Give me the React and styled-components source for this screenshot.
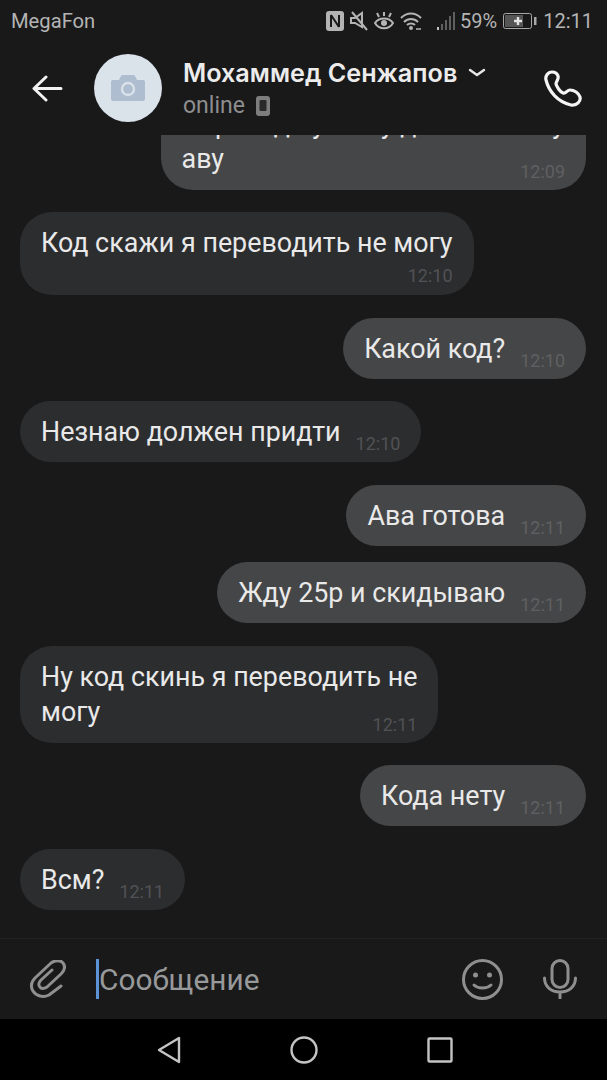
import React from "react";
import styled, { createGlobalStyle } from "styled-components";

const messages = [
  { id: 1, out: true, lines: ["Переведи у кому делаю ей эту", "аву"], time: "12:09", layout: "overlap" },
  { id: 2, lines: ["Код скажи я переводить не могу"], time: "12:10", layout: "below", gap: 22 },
  { id: 3, out: true, lines: ["Какой код?"], time: "12:10" },
  { id: 4, lines: ["Незнаю должен придти"], time: "12:10" },
  { id: 5, out: true, lines: ["Ава готова"], time: "12:11" },
  { id: 6, out: true, lines: ["Жду 25р и скидываю"], time: "12:11", gap: 16 },
  { id: 7, lines: ["Ну код скинь я переводить не", "могу"], time: "12:11", layout: "overlap" },
  { id: 8, out: true, lines: ["Кода нету"], time: "12:11" },
  { id: 9, lines: ["Всм?"], time: "12:11" },
];

function StatusIcons() {
  return (
    <>
      <svg width="18" height="20" viewBox="0 0 18 20">
        <rect width="18" height="20" y="0" rx="3" fill="#b4b4b4" />
        <path d="M5 4v12M13 4v12M5 4l8 12" stroke="#19191a" strokeWidth="2" fill="none" />
      </svg>
      <svg width="18" height="20" viewBox="0 0 18 20" fill="none" stroke="#b4b4b4" strokeWidth="2">
        <path d="M1 7h4l7-5v14l-7-4H1z" />
        <path d="M2 1l15 18" />
      </svg>
      <svg width="20" height="20" viewBox="0 0 20 20" fill="none" stroke="#b4b4b4" strokeWidth="2">
        <path d="M1 12c4-6 14-6 18 0-4 7-14 7-18 0z" />
        <circle cx="10" cy="12" r="3" fill="#b4b4b4" stroke="none" />
        <path d="M3 2l2 4M10 1v4M17 2l-2 4" />
      </svg>
      <svg width="22" height="20" viewBox="0 0 22 20" fill="none" stroke="#b4b4b4" strokeWidth="2">
        <path d="M1 7c6-6 14-6 20 0M4 11c4-4 10-4 14 0M7 14c2-2 6-2 8 0" />
        <circle cx="11" cy="17" r="2" fill="#b4b4b4" stroke="none" />
        <path d="M16 18h5" strokeWidth="1.5" />
      </svg>
      <SignalIcon width="19" height="20" viewBox="0 0 19 20">
        <rect x="0" y="16" width="2" height="3" fill="#c4c4c4" />
        <rect x="4" y="13" width="2" height="6" fill="#5f5f5f" />
        <rect x="8" y="9" width="2" height="10" fill="#5f5f5f" />
        <rect x="12" y="5" width="2" height="14" fill="#5f5f5f" />
        <rect x="16" y="1" width="2" height="18" fill="#5f5f5f" />
      </SignalIcon>
    </>
  );
}

function BatteryIcon() {
  return (
    <svg width="34" height="18" viewBox="0 0 34 18">
      <rect x="0.5" y="1.5" width="28" height="15" rx="2" fill="none" stroke="#a8a8a8" />
      <rect x="2" y="3" width="18" height="12" fill="#555" />
      <path d="M11 9h8M15 5v8" stroke="#e4e4e4" strokeWidth="2.4" />
      <rect x="31" y="5" width="2.5" height="8" fill="#a8a8a8" />
    </svg>
  );
}

function App() {
  return (
    <>
      <GlobalStyle />
      <Screen>
        <StatusBar>
          <Carrier>MegaFon</Carrier>
          <StatusRight>
            <StatusIcons />
            <Percent>59%</Percent>
            <BatteryIcon />
            <Clock>12:11</Clock>
          </StatusRight>
        </StatusBar>

        <Header>
          <BackButton>
            <svg width="31" height="27" viewBox="0 0 31 27" fill="none" stroke="#f2f2f2" strokeWidth="3" strokeLinecap="round" strokeLinejoin="round">
              <path d="M2 13.5h27M14 2L2 13.5 14 25" />
            </svg>
          </BackButton>
          <Avatar>
            <svg width="34" height="26" viewBox="0 0 34 26">
              <path d="M2 5h6l2-4q.5-1 2-1h10q1.500 0 2 1l2 4h6q2 0 2 2v17q0 2-2 2H2q-2 0-2-2V7q0-2 2-2z" fill="#aebdcf" />
              <circle cx="17" cy="14" r="6" fill="none" stroke="#dae2ea" strokeWidth="2.400" />
            </svg>
          </Avatar>
          <Peer>
            <NameRow>
              <Name>Мохаммед Сенжапов</Name>
              <svg width="18" height="9" viewBox="0 0 18 9" fill="none" stroke="#e8e8e8" strokeWidth="2.400" strokeLinecap="round" strokeLinejoin="round">
                <path d="M2 2l7 5 7-5" />
              </svg>
            </NameRow>
            <Presence>
              online
              <svg width="14" height="20" viewBox="0 0 14 20">
                <rect width="14" height="20" rx="3" fill="#7d7d7e" />
                <rect x="3.500" y="4" width="7" height="11" rx="1" fill="#2a2a2b" />
              </svg>
            </Presence>
          </Peer>
          <svg width="38" height="37" viewBox="0 0 38 37" fill="none" stroke="#f5f5f5" strokeWidth="3.200" strokeLinejoin="round">
            <path d="M8 2C4 2 1 6 2 10c3 12 12 22 25 25 6 1 10-4 9-8-1-4-6-7-10-7-3 0-4 4-7 3-3-1-6-6-7-9 0-3 3-4 2-8-1-3-3-4-6-4z" />
          </svg>
        </Header>

        <MessageList>
          {messages.map((m) => (
            <Row key={m.id} $out={m.out} $gap={m.gap}>
              <Bubble $out={m.out} $layout={m.layout}>
                <BubbleText>
                  {m.lines.map((line) => (
                    <div key={line}>{line}</div>
                  ))}
                </BubbleText>
                <Stamp $out={m.out} $layout={m.layout}>{m.time}</Stamp>
              </Bubble>
            </Row>
          ))}
        </MessageList>

        <Composer>
          <svg width="36" height="38" viewBox="0 0 36 38" fill="none" stroke="#8f8f90" strokeWidth="3" strokeLinecap="round" strokeLinejoin="round">
            <path d="M31 26L19 35c-6 3-13 1-16-4-3-5-2-9 2-13L21 3c4-3 10-3 12 0 3 4 1 8-2 11L17 27c-3 2-6 2-7 0-2-2-1-5 1-7l11-10" />
          </svg>
          <Field>
            <Caret />
            <Placeholder>Сообщение</Placeholder>
          </Field>
          <svg width="41" height="41" viewBox="0 0 41 41" fill="none" stroke="#8f8f90" strokeWidth="3" strokeLinecap="round">
            <circle cx="20.500" cy="20.500" r="19" />
            <circle cx="13.500" cy="16" r="2.500" fill="#8f8f90" stroke="none" />
            <circle cx="27.500" cy="16" r="2.500" fill="#8f8f90" stroke="none" />
            <path d="M12 26c4 4 13 4 17 0" />
          </svg>
          <MicIcon width="34" height="40" viewBox="0 0 34 40" fill="none" stroke="#8f8f90" strokeWidth="3" strokeLinecap="round">
            <rect x="9" y="1.500" width="16" height="27" rx="8" />
            <path d="M1.500 19c0 9 7 14 15.500 14s15.500-5 15.500-14M17 33v6" />
          </MicIcon>
        </Composer>

        <NavBar>
          <svg width="24" height="28" viewBox="0 0 24 28" fill="none" stroke="#c4c4c4" strokeWidth="2.400" strokeLinejoin="round">
            <path d="M22 2L2 14l20 12z" />
          </svg>
          <svg width="28" height="28" viewBox="0 0 28 28" fill="none" stroke="#c4c4c4" strokeWidth="2.400">
            <circle cx="14" cy="14" r="12.500" />
          </svg>
          <svg width="26" height="26" viewBox="0 0 26 26" fill="none" stroke="#c4c4c4" strokeWidth="2.400" strokeLinejoin="round">
            <rect x="1.500" y="1.500" width="23" height="23" rx="1" />
          </svg>
        </NavBar>
      </Screen>
    </>
  );
}

export default App;

const GlobalStyle = createGlobalStyle`
  html, body {
    margin: 0;
    padding: 0;
    background: #19191a;
  }
`;

const Screen = styled.div`
  width: 607px;
  height: 1080px;
  display: flex;
  flex-direction: column;
  overflow: hidden;
  background: #19191a;
  font-family: Roboto, "Liberation Sans", sans-serif;
`;

const StatusBar = styled.div`
  height: 41px;
  flex: none;
  box-sizing: border-box;
  display: flex;
  align-items: center;
  justify-content: space-between;
  padding: 1px 14px 0 11px;
  color: #b4b4b4;
`;

const Carrier = styled.span`
  font-size: 20.200px;
`;

const StatusRight = styled.div`
  display: flex;
  align-items: center;
  gap: 6px;
`;

const SignalIcon = styled.svg`
  margin-left: 9px;
`;

const Percent = styled.span`
  font-size: 20px;
  margin-left: -2px;
`;

const Clock = styled.span`
  font-size: 20px;
`;

const Header = styled.div`
  height: 94px;
  flex: none;
  display: flex;
  align-items: center;
  padding: 0 25px 0 32px;
`;

const BackButton = styled.div`
  width: 62px;
  display: flex;
`;

const Avatar = styled.div`
  width: 68px;
  height: 68px;
  flex: none;
  border-radius: 50%;
  background: #dae2ea;
  display: flex;
  align-items: center;
  justify-content: center;
`;

const Peer = styled.div`
  flex: 1;
  padding-left: 21px;
  display: flex;
  flex-direction: column;
  gap: 5px;
`;

const NameRow = styled.div`
  display: flex;
  align-items: center;
  gap: 11px;
`;

const Name = styled.span`
  font-family: Inter, sans-serif;
  font-weight: 600;
  font-size: 25.200px;
  line-height: 30px;
  color: #ececec;
`;

const Presence = styled.div`
  display: flex;
  align-items: center;
  gap: 11px;
  font-size: 23px;
  line-height: 26px;
  color: #8e8e8f;
`;

const MessageList = styled.div`
  flex: 1;
  min-height: 0;
  overflow: hidden;
  display: flex;
  flex-direction: column;
  justify-content: flex-end;
  padding: 0 21px 28px 20px;
`;

const Row = styled.div`
  flex: none;
  display: flex;
  justify-content: ${(p) => (p.$out ? "flex-end" : "flex-start")};
  margin-top: ${(p) => p.$gap ?? 22.7}px;
`;

const Bubble = styled.div`
  display: flex;
  flex-direction: ${(p) => (p.$layout ? "column" : "row")};
  align-items: flex-end;
  gap: ${(p) => (p.$layout ? "0" : "15px")};
  padding: 14px 21px 12px;
  border-radius: 32px;
  background: ${(p) => (p.$out ? "#454647" : "#2c2d2f")};
`;

const BubbleText = styled.div`
  font-size: 26.850px;
  line-height: 35px;
  color: #e9e9e9;
  white-space: nowrap;
  align-self: flex-start;
`;

const Stamp = styled.span`
  font-size: 18px;
  line-height: 22px;
  color: ${(p) => (p.$out ? "#5f6062" : "#515255")};
  margin-bottom: ${(p) => (p.$layout === "below" ? "-4px" : "-5px")};
  margin-top: ${(p) => (p.$layout === "overlap" ? "-16px" : p.$layout === "below" ? "4px" : "0")};
`;

const Composer = styled.div`
  height: 81px;
  flex: none;
  box-sizing: border-box;
  border-top: 1px solid #232324;
  display: flex;
  align-items: center;
  padding: 0 30px;
`;

const Field = styled.div`
  flex: 1;
  display: flex;
  align-items: center;
  padding-left: 30px;
`;

const Caret = styled.div`
  width: 3px;
  height: 40px;
  background: #5b93d6;
`;

const Placeholder = styled.span`
  font-size: 29.800px;
  color: #98999b;
`;

const MicIcon = styled.svg`
  margin-left: 40px;
`;

const NavBar = styled.div`
  height: 61px;
  flex: none;
  background: #000;
  display: flex;
  align-items: center;
  justify-content: center;
  gap: 109px;
  padding-left: 2px;
`;
